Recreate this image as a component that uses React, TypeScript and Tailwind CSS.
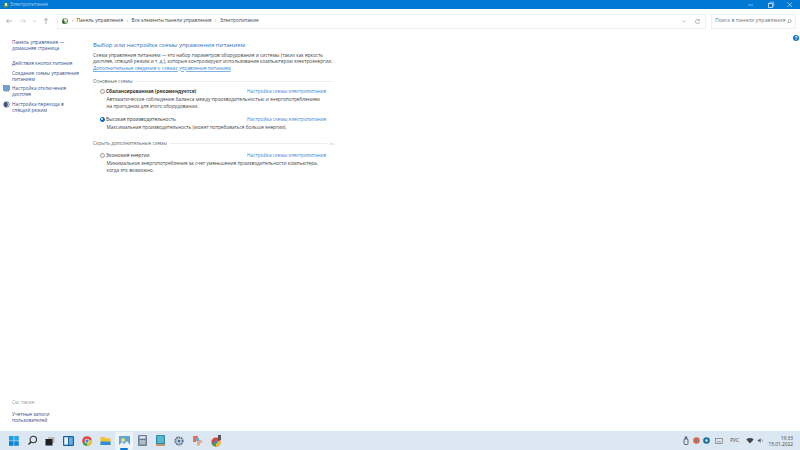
import React from "react";

const Radio = ({ on }: { on?: boolean }) => (
  <span className={`w-[5.5px] h-[5.5px] rounded-full shrink-0 flex items-center justify-center border-[0.7px] ${on ? "border-[#0067c0] bg-[#0067c0]" : "border-[#9a9a9a] bg-[#fafafa]"}`}>
    {on && <span className="w-[2px] h-[2px] rounded-full bg-white" />}
  </span>
);

const Plan = ({ on, bold, name, desc, mt }: { on?: boolean; bold?: boolean; name: string; desc: React.ReactNode; mt: string }) => (
  <div className={`${mt} pl-[6.5px]`}>
    <div className="flex items-center h-[7px]">
      <Radio on={on} />
      <span className={`ml-[1px] text-[4.75px] text-[#333] ${bold ? "font-bold" : ""}`}>{name}</span>
      <span className="ml-auto text-[4.75px] text-[#3a86d4] w-[86px] whitespace-nowrap">Настройка схемы электропитания</span>
    </div>
    <div className="pl-[7px] mt-[1px] text-[4.75px] leading-[7px] text-[#444] whitespace-nowrap">{desc}</div>
  </div>
);

const Side = ({ children, mt, icon }: { children: React.ReactNode; mt: string; icon?: React.ReactNode }) => (
  <div className={`${mt} relative pl-[12px] text-[4.75px] leading-[6px] text-[#34508a] whitespace-nowrap`}>
    {icon}
    {children}
  </div>
);

export default function App() {
  return (
    <div className="w-[800px] h-[450px] flex flex-col bg-white overflow-hidden" style={{ fontFamily: '"Open Sans","Noto Sans",sans-serif' }}>
      <div className="h-[9px] bg-[#0078d4] flex items-center pl-[3px] shrink-0">
        <svg width="6" height="6" viewBox="0 0 6 6"><circle cx="3" cy="3" r="2.6" fill="#5a8f4a" /><rect x="2" y="1" width="2" height="3" fill="#dfe8c8" /></svg>
        <span className="ml-[1px] text-[4.7px] text-[#a9d4f2]">Электропитание</span>
        <div className="ml-auto flex items-center text-white">
          <svg width="8" height="8" viewBox="0 0 8 8" className="mr-[12px]"><path d="M1 4h5" stroke="#a9d4f2" strokeWidth=".7" /></svg>
          <svg width="8" height="8" viewBox="0 0 8 8" className="mr-[11px]"><rect x="1.5" y="2.5" width="4" height="4" fill="none" stroke="#cfe6f8" strokeWidth=".8" /><path d="M3 2V1.2h3.8V5H6" fill="none" stroke="#cfe6f8" strokeWidth=".6" /></svg>
          <svg width="8" height="8" viewBox="0 0 8 8" className="mr-[6px]"><path d="M1.5 1.5l4.5 4.5M6 1.5L1.5 6" stroke="#cfe6f8" strokeWidth=".7" /></svg>
        </div>
      </div>

      <div className="h-[24px] shrink-0 flex items-center">
        <div className="w-[57px] flex items-center shrink-0">
          <svg width="8" height="8" viewBox="0 0 8 8" className="ml-[5px]"><path d="M7 4H1.5M3.5 2L1.5 4l2 2" fill="none" stroke="#999" strokeWidth=".7" /></svg>
          <svg width="8" height="8" viewBox="0 0 8 8" className="ml-[6px]"><path d="M1 4h5.5M4.5 2l2 2-2 2" fill="none" stroke="#c4c4c4" strokeWidth=".7" /></svg>
          <svg width="5" height="8" viewBox="0 0 5 8" className="ml-[5px]"><path d="M1 3.5l1.5 1.5L4 3.5" fill="none" stroke="#aaa" strokeWidth=".6" /></svg>
          <svg width="8" height="8" viewBox="0 0 8 8" className="ml-[5px]"><path d="M4 7V1.5M2 3.5l2-2 2 2" fill="none" stroke="#888" strokeWidth=".7" /></svg>
        </div>
        <div className="w-[649px] h-[15px] border border-[#f0f0f0] flex items-center pl-[3px] text-[4.8px] text-[#444] shrink-0">
          <svg width="8" height="8" viewBox="0 0 8 8"><circle cx="4" cy="4" r="3" fill="#5b8f52" /><rect x="3" y="1.5" width="3" height="4" fill="#d8e4c6" /><rect x="1.5" y="4" width="2" height="2.5" fill="#2f4f3a" /></svg>
          <span className="ml-[3px] text-[#777]">›</span>
          <span className="ml-[3px]">Панель управления</span>
          <span className="ml-[3.5px] text-[#777]">›</span>
          <span className="ml-[3.5px]">Все элементы панели управления</span>
          <span className="ml-[3.5px] text-[#777]">›</span>
          <span className="ml-[3.5px]">Электропитание</span>
          <svg width="6" height="6" viewBox="0 0 6 6" className="ml-auto mr-[7px]"><path d="M1.5 2.5L3 4l1.5-1.5" fill="none" stroke="#999" strokeWidth=".6" /></svg>
          <svg width="7" height="7" viewBox="0 0 7 7" className="mr-[4px]"><path d="M5.5 3.5A2 2 0 1 1 4.8 2M5.3 1v1.5H3.8" fill="none" stroke="#888" strokeWidth=".6" /></svg>
        </div>
        <div className="ml-[5px] w-[85px] h-[15px] border border-[#f0f0f0] flex items-center pl-[3px] text-[5.15px] text-[#777] shrink-0">
          <span className="whitespace-nowrap">Поиск в панели управления</span>
          <svg width="7" height="7" viewBox="0 0 7 7" className="ml-auto mr-[3px]"><circle cx="4" cy="3" r="1.6" fill="none" stroke="#777" strokeWidth=".6" /><path d="M3 4L1.5 5.5" stroke="#777" strokeWidth=".7" /></svg>
        </div>
      </div>

      <div className="flex-1 flex min-h-0 relative">
        <div className="w-[90px] shrink-0 flex flex-col pb-[8px]">
          <Side mt="mt-[6px]">Панель управления —<br />домашняя страница</Side>
          <Side mt="mt-[9px]">Действия кнопок питания</Side>
          <Side mt="mt-[3.5px]">Создание схемы управления<br />питанием</Side>
          <Side mt="mt-[3px]" icon={<svg width="7" height="7" viewBox="0 0 7 7" className="absolute left-[2.5px] top-0"><rect x=".5" y=".5" width="6" height="5" fill="#6f9fd8" stroke="#4a6fa5" strokeWidth=".5" /><rect x="1" y="5.5" width="5" height="1" fill="#8a9bb0" /></svg>}>Настройка отключения<br />дисплея</Side>
          <Side mt="mt-[4px]" icon={<svg width="7" height="7" viewBox="0 0 7 7" className="absolute left-[2.5px] top-0"><circle cx="3.5" cy="3.5" r="3" fill="#46597a" /><path d="M3.5 1a2.5 2.5 0 0 1 0 5 3 3 0 0 0 0-5z" fill="#d5dce8" /></svg>}>Настройка перехода в<br />спящий режим</Side>
          <div className="mt-auto pl-[12px] text-[4.75px] leading-[6px] text-[#999]">См. также</div>
          <Side mt="mt-[6px]">Учетные записи<br />пользователей</Side>
        </div>

        <div className="w-[243px] shrink-0 pl-[3px] pt-[8px]">
          <div className="text-[6.05px] leading-[9px] text-[#2f6fb5] whitespace-nowrap">Выбор или настройка схемы управления питанием</div>
          <div className="mt-[2px] text-[4.75px] leading-[6.3px] text-[#444] whitespace-nowrap">
            Схема управления питанием — это набор параметров оборудования и системы (таких как яркость<br />
            дисплея, спящий режим и т. д.), которые контролируют использование компьютером электроэнергии.
          </div>
          <div className="text-[4.75px] leading-[6.3px] text-[#3a86d4] underline decoration-[#7fb2e6] whitespace-nowrap">Дополнительные сведения о схемах управления питанием</div>

          <div className="mt-[7px] flex items-center h-[7px]">
            <span className="text-[4.75px] text-[#666] whitespace-nowrap">Основные схемы</span>
            <span className="ml-[3px] flex-1 h-px bg-[#eeeeee]" />
          </div>
          <Plan mt="mt-[3px]" bold name="Сбалансированная (рекомендуется)" desc={<>Автоматическое соблюдение баланса между производительностью и энергопотреблением<br />на пригодном для этого оборудовании.</>} />
          <Plan on mt="mt-[6px]" name="Высокая производительность" desc="Максимальная производительность (может потребоваться больше энергии)." />
          <div className="mt-[9.5px] flex items-center h-[7px]">
            <span className="text-[4.75px] text-[#666] whitespace-nowrap">Скрыть дополнительные схемы</span>
            <span className="ml-[3px] flex-1 h-px bg-[#eeeeee]" />
            <svg width="7" height="6" viewBox="0 0 7 6" className="ml-[1px] -mr-[1.5px]"><path d="M1.5 4L3.5 2l2 2" fill="none" stroke="#aaa" strokeWidth=".6" /></svg>
          </div>
          <Plan mt="mt-[4.5px]" name="Экономия энергии" desc={<>Минимальное энергопотребление за счет уменьшения производительности компьютера,<br />когда это возможно.</>} />
        </div>
        <div className="absolute right-[1px] top-[2px] w-[6px] h-[6px] rounded-full bg-[#0a78d4] text-white text-[4.5px] font-bold flex items-center justify-center">?</div>
      </div>

      <div className="h-[19px] bg-[#dbe7f2] shrink-0 flex items-center">
        <div className="ml-[9px] flex items-center">
          <svg width="10" height="10" viewBox="0 0 10 10"><rect width="4.6" height="4.6" fill="#1e9de6" /><rect x="5.2" width="4.6" height="4.6" fill="#2aa5ea" /><rect y="5.2" width="4.6" height="4.6" fill="#0c7fd1" /><rect x="5.2" y="5.2" width="4.6" height="4.6" fill="#1288da" /></svg>
          <svg width="11" height="11" viewBox="0 0 11 11" className="ml-[8px]"><circle cx="6.3" cy="4.5" r="3.2" fill="none" stroke="#333" strokeWidth="1.1" /><path d="M4 7L1.5 9.5" stroke="#222" strokeWidth="1.3" /></svg>
          <svg width="10" height="10" viewBox="0 0 10 10" className="ml-[7px]"><rect x="3" y="1" width="6.5" height="6" fill="#bbb" /><rect x=".5" y="3" width="7" height="6.5" fill="#1f1f1f" /></svg>
          <svg width="11" height="10" viewBox="0 0 11 10" className="ml-[8px]"><rect width="11" height="10" rx="1" fill="#1a5f9e" /><rect x="1.2" y="1.2" width="3.8" height="7.5" fill="#e9f2fa" /><rect x="6" y="1.2" width="3.8" height="7.5" fill="#5fb0ea" /></svg>
          <svg width="10" height="10" viewBox="0 0 10 10" className="ml-[8px]"><circle cx="5" cy="5" r="4.8" fill="#e2483a" /><path d="M5 5L.6 7.3A4.8 4.8 0 0 0 5 9.8z" fill="#3aa757" /><path d="M5 5l4.6-1.5A4.8 4.8 0 0 1 5 9.8z" fill="#f5c21a" /><circle cx="5" cy="5" r="2.3" fill="#fff" /><circle cx="5" cy="5" r="1.7" fill="#3d85e8" /></svg>
          <svg width="11" height="10" viewBox="0 0 11 10" className="ml-[8px]"><path d="M.5 1h4l1 1.3h5V9H.5z" fill="#f2c233" /><rect x=".5" y="5.5" width="10" height="3.5" fill="#2a8fd8" /></svg>
          <div className="ml-[4px] w-[18px] h-[18px] rounded-[2px] bg-[#eef3f8] relative flex items-center justify-center">
            <svg width="11" height="9" viewBox="0 0 11 9"><rect width="11" height="9" fill="#5aa9de" /><circle cx="4" cy="4" r="2" fill="#f2d76a" /><path d="M0 9l3-3 2 2 3-3 3 4z" fill="#e8f3fa" /></svg>
            <span className="absolute bottom-0 left-[5px] w-[8px] h-[1.5px] rounded-full bg-[#0a78d4]" />
          </div>
          <svg width="9" height="11" viewBox="0 0 9 11" className="ml-[5px]"><rect width="9" height="11" rx="1" fill="#6f7f90" /><rect x="1.5" y="1.2" width="6" height="2.4" fill="#dbe7f2" /><rect x="1.5" y="5" width="6" height="4.5" fill="#aebccb" /></svg>
          <svg width="9" height="11" viewBox="0 0 9 11" className="ml-[9px]"><rect width="9" height="11" rx="1" fill="#2a8aa8" /><rect x="1.2" y="1" width="6.6" height="7" fill="#5cb6cf" /><rect y="9" width="9" height="2" fill="#c49a6a" /></svg>
          <svg width="10" height="10" viewBox="0 0 10 10" className="ml-[9px]"><circle cx="5" cy="5" r="3.6" fill="none" stroke="#5d6f85" strokeWidth="2" strokeDasharray="1.6 .7" /><circle cx="5" cy="5" r="1.5" fill="#3a6fb0" /></svg>
          <svg width="11" height="11" viewBox="0 0 11 11" className="ml-[8px]"><path d="M1 1h5v3H4v3H1z" fill="#e8734a" /><path d="M5 5h5v3H8v2.5H5z" fill="#f0a58c" /><rect x="4" y="3" width="3" height="3" fill="#6aa8e0" /></svg>
          <div className="ml-[8px] relative w-[11px] h-[12px]">
            <svg width="11" height="12" viewBox="0 0 11 12"><circle cx="5" cy="7" r="4.6" fill="#d8483a" /><path d="M5 7L.7 9a4.6 4.6 0 0 0 4.3 2.6z" fill="#3aa757" /><path d="M5 7l4.4-1.2A4.6 4.6 0 0 1 5 11.6z" fill="#f5c21a" /><circle cx="5" cy="7" r="1.8" fill="#3d85e8" /><rect x="7" y="0" width="3" height="5" fill="#555" /></svg>
          </div>
        </div>

        <div className="ml-auto flex items-center">
          <svg width="6" height="9" viewBox="0 0 6 9"><rect x="1" y="3" width="4" height="5.5" rx="1" fill="none" stroke="#444" strokeWidth=".8" /><rect x="1.8" y=".5" width="2.4" height="2.5" fill="#666" /></svg>
          <svg width="7" height="7" viewBox="0 0 7 7" className="ml-[4px]"><circle cx="3.5" cy="3.5" r="3.3" fill="#e2683a" /><circle cx="3.5" cy="3.5" r="1.4" fill="#4a86d8" /></svg>
          <svg width="7" height="7" viewBox="0 0 7 7" className="ml-[3px]"><circle cx="3.5" cy="3.5" r="3.3" fill="#1e6f9e" /><circle cx="3.5" cy="3.5" r="1.3" fill="#cfe6f3" /></svg>
          <svg width="8" height="6" viewBox="0 0 8 6" className="ml-[5px]"><rect x=".4" y=".4" width="7.2" height="5.2" fill="none" stroke="#666" strokeWidth=".6" /><path d="M2 3.8h4" stroke="#666" strokeWidth=".6" /></svg>
          <span className="ml-[7px] text-[4.8px] text-[#444]">РУС</span>
          <svg width="8" height="7" viewBox="0 0 8 7" className="ml-[7px]"><path d="M4 6.5L.3 2.4a5.4 5.4 0 0 1 7.4 0z" fill="#444" /></svg>
          <svg width="7" height="7" viewBox="0 0 7 7" className="ml-[3px]"><path d="M.8 2.7h1.2L3.6 1.2v4.6L2 4.3H.8z" fill="#555" /><path d="M4.8 2.3a1.6 1.6 0 0 1 0 2.4" fill="none" stroke="#555" strokeWidth=".5" /></svg>
          <div className="ml-[9px] mr-[7px] w-[20px] flex flex-col items-end text-[4.8px] leading-[6px] text-[#444]">
            <span>19:33</span>
            <span className="whitespace-nowrap">15.01.2022</span>
          </div>
        </div>
      </div>
    </div>
  );
}
